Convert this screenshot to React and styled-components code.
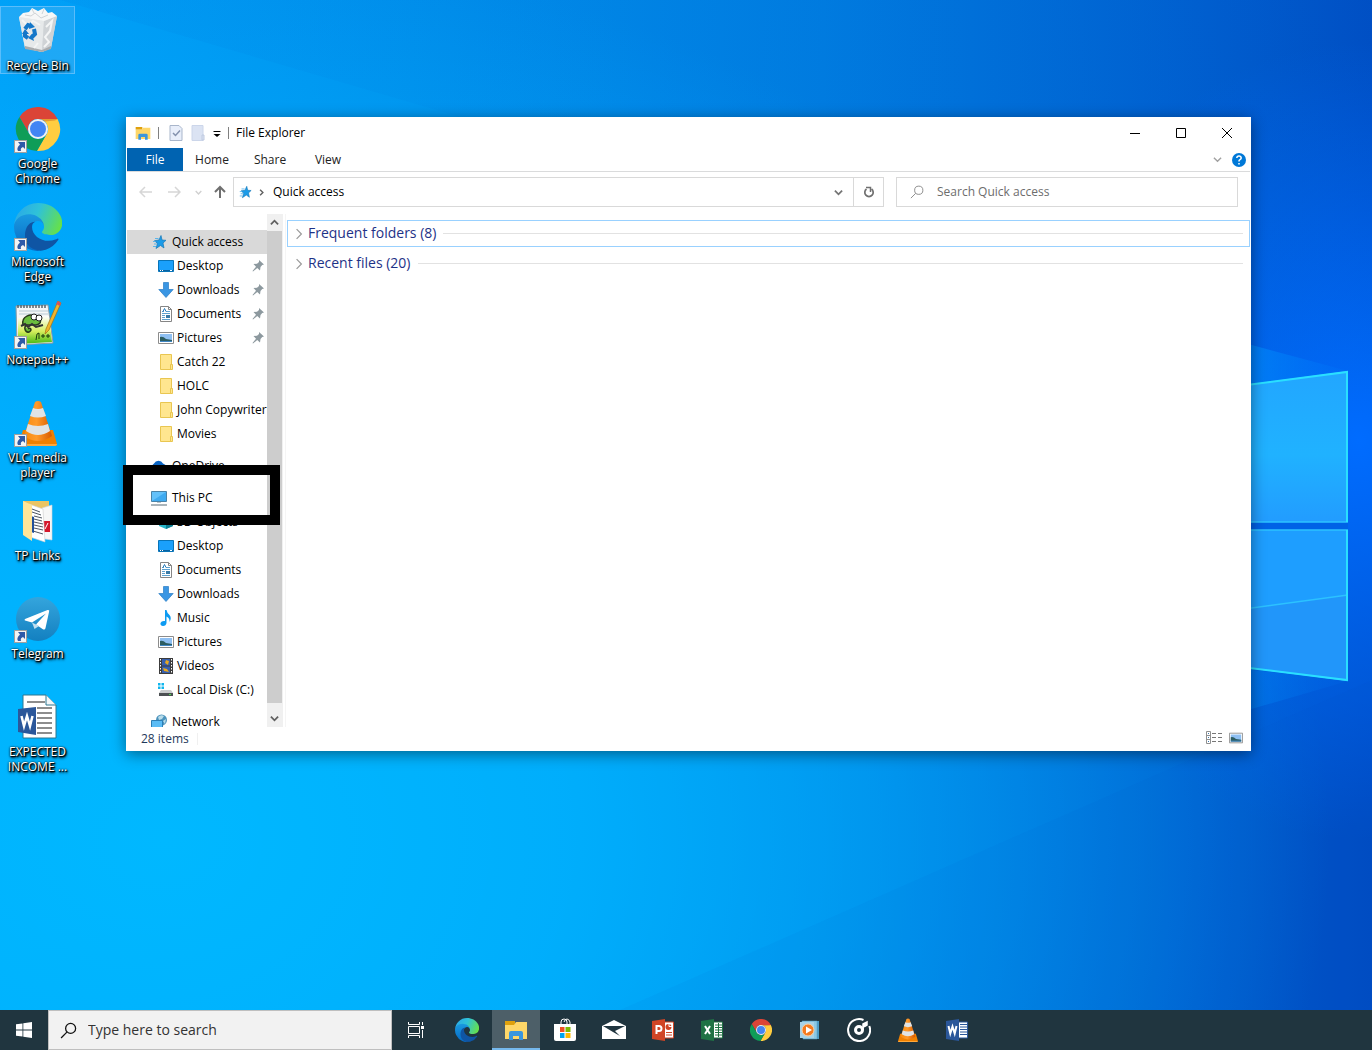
import React from "react";
import styled, { createGlobalStyle } from "styled-components";

const GlobalStyle = createGlobalStyle`
  * {
    box-sizing: border-box;
  }

  body {
    margin: 0;
    font-family: "Open Sans", "Noto Sans", sans-serif;
    font-size: 12px;
    line-height: 16px;
    color: #000;
  }

  button, input {
    font: inherit;
    color: inherit;
  }

  button {
    border: none;
    background: none;
    padding: 0;
  }

  svg {
    display: block;
    flex: none;
  }
`;

/* ---------- desktop ---------- */

const Desktop = styled.div`
  position: relative;
  display: flex;
  flex-direction: column;
  min-height: 100vh;
  overflow: hidden;
  isolation: isolate;
  background:
    radial-gradient(ellipse 24% 38% at 99% 42%, #006cff 0%, rgba(0, 108, 255, 0) 100%),
    radial-gradient(ellipse 85% 85% at 12% 80%, #00b8ff 0%, rgba(0, 180, 255, 0.85) 35%, rgba(0, 160, 255, 0) 100%),
    linear-gradient(90deg, #00a0f8 0%, #0090ec 30%, #007ce0 60%, #0060d0 85%, #004cc2 100%);
`;

const WallpaperSvg = styled.svg`
  position: absolute;
  inset: 0;
  width: 100%;
  height: 100%;
  z-index: -1;
`;

const Workspace = styled.main`
  flex: 1;
  display: flex;
  align-items: flex-start;
`;

const Shortcuts = styled.div`
  display: flex;
  flex-direction: column;
  gap: 30px;
  width: 76px;
  padding-top: 6px;
  flex: none;
`;

const Shortcut = styled.button`
  display: flex;
  flex-direction: column;
  align-items: center;
  justify-content: flex-start;
  width: 75px;
  height: 68px;
  border: 1px solid ${(p) => (p.$selected ? "rgba(150, 210, 255, 0.5)" : "transparent")};
  background: ${(p) => (p.$selected ? "rgba(120, 190, 240, 0.25)" : "transparent")};
`;

const ShortcutArt = styled.span`
  position: relative;
  display: block;
  height: 48px;
  margin-bottom: 3px;
`;

const LinkBadge = styled.span`
  position: absolute;
  left: 0;
  bottom: 0;
  border: 1px solid #a0a0a0;
  background: #f4f4f4;
`;

const ShortcutLabel = styled.span`
  color: #fff;
  line-height: 15px;
  text-align: center;
  white-space: pre;
  text-shadow: 1px 1px 1px #000, 1px 1px 2px #000, 1px 2px 3px #000, 0 0 2px #000;
`;

/* ---------- explorer window ---------- */

const Window = styled.section`
  position: relative;
  flex: 1;
  min-width: 0;
  margin: 117px 121px 60px 50px;
  padding: 0 1px;
  background: #fff;
  box-shadow: 0 3px 14px rgba(0, 0, 0, 0.45);
`;

const TitleBar = styled.header`
  display: flex;
  align-items: center;
  height: 31px;
  padding-left: 8px;
`;

const Separator = styled.span`
  width: 1px;
  height: 12px;
  margin: 0 7px;
  background: #808080;
`;

const QuickTools = styled.div`
  display: flex;
  align-items: center;
  gap: 8px;
  padding-left: 3px;
`;

const Title = styled.h1`
  flex: 1;
  margin: 0;
  font-size: 12px;
  font-weight: 400;
`;

const CaptionButton = styled.button`
  display: flex;
  align-items: center;
  justify-content: center;
  width: 46px;
  height: 31px;
`;

const Ribbon = styled.div`
  display: flex;
  height: 24px;
  border-bottom: 1px solid #dadbdc;
`;

const RibbonTab = styled.button`
  height: 23px;
  width: ${(p) => (p.$active ? "56px" : "58px")};
  background: ${(p) => (p.$active ? "#0063b1" : "transparent")};
  color: ${(p) => (p.$active ? "#fff" : "#222")};
`;

const RibbonTools = styled.div`
  display: flex;
  align-items: center;
  gap: 9px;
  margin-left: auto;
  padding-right: 3px;
`;

const NavBar = styled.div`
  display: flex;
  align-items: center;
  height: 42px;
  padding: 0 12px 2px 12px;
`;

const NavButtons = styled.div`
  display: flex;
  align-items: center;
  gap: 14px;
  width: 94px;
  flex: none;
`;

const UpSlot = styled.span`
  margin-left: -3px;
`;

const AddressBox = styled.div`
  display: flex;
  align-items: center;
  flex: 1 1 651px;
  min-width: 0;
  height: 30px;
  margin-right: 12px;
  padding-left: 4px;
  border: 1px solid #d9d9d9;
`;

const AddressPath = styled.span`
  display: flex;
  align-items: center;
  gap: 6px;
  flex: 1;
`;

const AddressText = styled.span`
  padding-left: 2px;
`;

const AddressButton = styled.button`
  display: flex;
  align-items: center;
  justify-content: center;
  width: 30px;
  height: 28px;
  border-left: 1px solid ${(p) => (p.$divided ? "#d9d9d9" : "transparent")};
`;

const SearchBox = styled.label`
  display: flex;
  align-items: center;
  gap: 13px;
  flex: 1 1 342px;
  min-width: 0;
  height: 30px;
  padding: 0 13px;
  border: 1px solid #d9d9d9;
`;

const SearchInput = styled.input`
  flex: 1;
  min-width: 0;
  padding: 0;
  border: none;
  outline: none;
  background: transparent;

  &::placeholder {
    color: ${(p) => p.$tone};
    opacity: 1;
  }
`;

const Body = styled.div`
  display: flex;
  height: 513px;
`;

const Tree = styled.nav`
  width: 140px;
  padding-top: 16px;
  overflow: hidden;
  flex: none;
`;

const TreeGroup = styled.div`
  margin-bottom: 8px;
`;

const TreeItem = styled.button`
  display: flex;
  align-items: center;
  gap: ${(p) => (p.$child ? "3px" : "5px")};
  width: 140px;
  height: 24px;
  padding-left: ${(p) => (p.$child ? "31px" : "24px")};
  background: ${(p) => (p.$selected ? "#d9d9d9" : "transparent")};
  white-space: nowrap;
  text-align: left;
`;

const TreeLabel = styled.span`
  flex: 1;
  line-height: 12px;
`;

const PinSlot = styled.span`
  padding-right: 3px;
`;

const ScrollTrack = styled.div`
  display: flex;
  flex-direction: column;
  width: 16px;
  background: #f0f0f0;
  flex: none;
`;

const ScrollArrow = styled.button`
  display: flex;
  align-items: center;
  justify-content: center;
  width: 15px;
  height: 17px;
`;

const ScrollThumb = styled.div`
  flex: 1;
  margin: 0 1px 7px 0;
  background: #cdcdcd;
`;

const Content = styled.div`
  flex: 1;
  margin-left: 2px;
  padding: 6px 0 0 1px;
  border-left: 1px solid #f5f5f5;
`;

const GroupHeader = styled.button`
  display: flex;
  align-items: center;
  gap: 3px;
  width: 100%;
  height: 27px;
  margin-bottom: 3px;
  padding: 0 6px 0 5px;
  border: 1px solid ${(p) => (p.$focused ? "#99d1ff" : "transparent")};
  color: #1e3287;
  font-size: 14px;
`;

const GroupName = styled.span`
  line-height: 20px;
  padding-bottom: 2px;
`;

const GroupRule = styled.span`
  flex: 1;
  height: 1px;
  margin-left: 4px;
  background: #e2e2e2;
`;

const StatusBar = styled.footer`
  display: flex;
  align-items: center;
  justify-content: space-between;
  height: 24px;
  padding: 0 7px 0 14px;
  color: #1e395b;
`;

const StatusCount = styled.span`
  padding-right: 8px;
  border-right: 1px solid #f0f0f0;
  line-height: 12px;
`;

const ViewModes = styled.div`
  display: flex;
  align-items: center;
  gap: 6px;
  padding-bottom: 3px;
`;

// black frame around the "This PC" node
const Highlight = styled.div`
  position: absolute;
  left: -3px;
  top: 348px;
  width: 157px;
  height: 60px;
  border: 10px solid #000;
  pointer-events: none;
`;

/* ---------- taskbar ---------- */

const Taskbar = styled.footer`
  display: flex;
  height: 40px;
  background: #20353f;
`;

const TaskButton = styled.button`
  display: flex;
  align-items: center;
  justify-content: center;
  width: 48px;
  height: 40px;
  background: ${(p) => (p.$active ? "#4d5f68" : "transparent")};
  border-bottom: ${(p) => (p.$active ? "2px solid #76b9ed" : "none")};
  padding-top: ${(p) => (p.$active ? "2px" : "0")};
`;

const TaskSearch = styled.label`
  display: flex;
  align-items: center;
  gap: 11px;
  width: 344px;
  padding: 0 11px;
  background: #f2f2f2;
  border: 1px solid #bfbfbf;
  font-size: 14px;
  line-height: 20px;
`;

const PinnedApps = styled.div`
  display: flex;
  gap: 1px;
  margin-left: 3px;
`;

/* ---------- drawings ---------- */

const Wallpaper = () => (
  <WallpaperSvg viewBox="0 0 1372 1050" preserveAspectRatio="none" aria-hidden="true">
    <defs>
      <linearGradient id="paneTop" x1="0" y1="0" x2="0" y2="1">
        <stop offset="0" stopColor="#22a6ff" />
        <stop offset=".55" stopColor="#20b2ff" />
        <stop offset="1" stopColor="#229cff" />
      </linearGradient>
      <linearGradient id="beam" x1="0" y1="0" x2="1" y2="0">
        <stop offset="0" stopColor="#00a4ff" stopOpacity=".7" />
        <stop offset="1" stopColor="#0080ff" stopOpacity=".1" />
      </linearGradient>
      <linearGradient id="topShade" x1="0" y1="0" x2="0" y2="1">
        <stop offset="0" stopColor="#0070d8" stopOpacity=".1" />
        <stop offset="1" stopColor="#0070d8" stopOpacity="0" />
      </linearGradient>
    </defs>
    <path d="M60 0H1372V420H1250L450 114Z" fill="url(#topShade)" />
    <path d="M620 1010 1372 680V1010Z" fill="#0058c8" opacity=".05" />
    <path d="M1200 331 1348 371 1200 392Z" fill="url(#beam)" />
    <path d="M1200 664 1348 681 1200 724Z" fill="url(#beam)" opacity=".6" />
    <path d="M1200 522H1348V530H1200Z" fill="#0062e6" />
    <path d="M1200 391 1348 371V522H1200Z" fill="url(#paneTop)" />
    <path d="M1200 530H1348V681L1200 662Z" fill="#1e9eff" />
    <path d="M1200 615 1348 595V681L1200 662Z" fill="#2196fa" />
    <path d="M1200 615 1348 595M1200 522H1348M1200 530H1348" stroke="#2cc2ff" strokeWidth="1.5" fill="none" />
    <path d="M1200 391 1347 372V522M1347 530V680L1200 662" stroke="#2adfff" strokeWidth="2" fill="none" />
  </WallpaperSvg>
);

const RecycleBin = () => (
  <svg width="48" height="48" viewBox="0 0 48 48">
    <path d="M5 10 43 9 37 41 28 45 11 41Z" fill="#d9dcde" />
    <path d="M5 10 30 14 28 45 11 41Z" fill="#e6e9ea" />
    <path d="M30 14 43 9 37 41 28 45Z" fill="#cfd3d6" />
    <path d="M11 39 28 43 37 39V42L28 45 11 42Z" fill="#a9acae" />
    <path d="M5 10 9 6 15 5 18 1 24 4 30 1 34 6 38 5 43 9 30 14Z" fill="#f6f7f7" />
    <path d="M11 8 17 9 21 6 27 11 34 8M18 2 20 6M30 2 28 7" stroke="#cfd3d6" fill="none" />
    <path d="M32 20 38 14 36 24 31 30 35 35 30 40M8 13 14 19 19 14 26 18M24 36 20 41" stroke="#f4f5f5" fill="none" strokeWidth="2" />
    <g fill="none" stroke="#1477c9" strokeWidth="4">
      <path d="M11 22 14 18 17 19" />
      <path d="M20 22 21 27 18 30" />
      <path d="M14 31 11 29 11 26" />
    </g>
    <path d="M16 15 21 20 15 22ZM20 34 14 31 18 27ZM8 27 11 22 15 27Z" fill="#1477c9" />
  </svg>
);

const Chrome = ({ size = 48 }) => (
  <svg width={size} height={size} viewBox={size === 48 ? "0 0 48 48" : "2 2 44 44"}>
    <path d="M24 14H43.600A22 22 0 0 0 5.500 12L15.300 29A10 10 0 0 1 24 14Z" fill="#db4437" />
    <path d="M32.700 29 22.900 46A22 22 0 0 0 43.600 14H24A10 10 0 0 1 32.700 29Z" fill="#ffcd40" />
    <path d="M15.300 29 5.500 12A22 22 0 0 0 22.900 46L32.700 29A10 10 0 0 1 15.300 29Z" fill="#0f9d58" />
    <path d="M24 14H43.600L41 15.500 26 17Z" fill="#a52714" opacity=".3" />
    <circle cx="24" cy="24" r="10" fill="#f1f1f1" />
    <circle cx="24" cy="24" r="8" fill="#4285f4" />
  </svg>
);

const Edge = ({ size = 48 }) => (
  <svg width={size} height={size} viewBox="0 0 256 256">
    <defs>
      <linearGradient id="edgeGreen" x1="0" y1=".3" x2="1" y2=".6">
        <stop offset="0" stopColor="#2aa9e8" />
        <stop offset=".45" stopColor="#2fc2d8" />
        <stop offset="1" stopColor="#66e04a" />
      </linearGradient>
      <linearGradient id="edgeBlue" x1="0" y1="0" x2="0" y2="1">
        <stop offset="0" stopColor="#1b9de2" />
        <stop offset="1" stopColor="#0669c4" />
      </linearGradient>
    </defs>
    <path d="M105.700 241.400a79.200 79.200 0 0 1-22.700-21.300 80.700 80.700 0 0 1 29.500-120c3.200-1.500 8.500-4.100 15.600-4a32.400 32.400 0 0 1 25.700 13 31.900 31.900 0 0 1 6.300 18.700c0-.2 24.500-79.600-80-79.600-43.900 0-80 41.700-80 78.200a130.200 130.200 0 0 0 12.100 56 128 128 0 0 0 156.400 67 75.500 75.500 0 0 1-62.800-8z" fill="url(#edgeBlue)" />
    <path d="M231 190.500c-3.400 1.800-6.900 3.400-10.500 4.700a101.600 101.600 0 0 1-35.900 6.500c-47.300 0-88.500-32.500-88.500-74.300a31.500 31.500 0 0 1 16.400-27.300c-42.800 1.800-53.800 46.400-53.800 72.500 0 74 68.100 81.400 82.800 81.400 7.900 0 19.800-2.300 27-4.600l1.300-.4a128.300 128.300 0 0 0 66.600-52.800 4 4 0 0 0-5.400-5.700z" fill="#0f55a4" />
    <path d="M152.300 148.900c-.9 1-3.300 2.500-3.300 5.700 0 2.600 1.700 5.100 4.700 7.300 14.600 10.100 42 8.800 42.100 8.800 10.800 0 21.300-2.900 30.600-8.400a62 62 0 0 0 30.700-53.500c.3-22.500-8-37.500-11.400-44.200C224.300 22.600 178.300 0 128.100 0a128 128 0 0 0-128 126.200c.5-36.500 36.800-66 80-66 3.500 0 23.500.3 42 10a72.600 72.600 0 0 1 30.900 29.300c6.100 10.600 7.200 24.100 7.200 29.500s-2.700 13.300-7.900 19.900z" fill="url(#edgeGreen)" />
  </svg>
);

const NotepadPlus = () => (
  <svg width="48" height="48" viewBox="0 0 48 48">
    <defs>
      <linearGradient id="nppGreen" x1="0" y1="0" x2="0" y2="1">
        <stop offset="0" stopColor="#fff" />
        <stop offset=".55" stopColor="#d5ee5c" />
        <stop offset="1" stopColor="#43b814" />
      </linearGradient>
    </defs>
    <path d="M2 5 34 4 39 42 3 44Z" fill="#f4f6f7" stroke="#8c9aa1" />
    <path d="M4 17 35 15 38 41 4 43Z" fill="url(#nppGreen)" />
    <path d="M4 4V7M7 4V7M10 4V7M13 4V7M16 4V7M19 4V7M22 4V7M25 4V7M28 4V7M31 4V7" stroke="#56646c" strokeWidth="1.500" />
    <path d="M5 10H34M5 13H34" stroke="#b9cbd5" />
    <path d="M9 24C7 15 17 12 22 16 28 17 28 23 22 24H13C9 25 11 32 15 31 19 29 16 26 14 28" fill="#6bbd3e" stroke="#263a1b" strokeWidth="1.500" />
    <circle cx="20" cy="16" r="3" fill="#fff" stroke="#222" />
    <circle cx="25" cy="17" r="3" fill="#fff" stroke="#222" />
    <path d="M7 25 11 23 14 26 18 23 22 26 29 24" stroke="#333" strokeWidth="2" fill="none" />
    <path d="M22 39 23 33 25 32 25 38M27 35H31M29 33V37M32 35H36M34 33V37" stroke="#173a0c" fill="none" />
    <path d="M44 0 47 2 35 29 31 33 32 28Z" fill="#efb52d" stroke="#a66f13" strokeWidth=".7" />
    <path d="M44 0 47 2 46 5 42 3Z" fill="#d8545b" />
  </svg>
);

const Vlc = ({ size = 48 }) => (
  <svg width={size} height={size} viewBox={size === 48 ? "0 0 48 48" : "4 1 40 46"}>
    <defs>
      <linearGradient id="vlcOrange" x1="0" y1="0" x2="1" y2="0">
        <stop offset="0" stopColor="#f78a10" />
        <stop offset=".45" stopColor="#ff9a2a" />
        <stop offset="1" stopColor="#d85a00" />
      </linearGradient>
    </defs>
    <path d="M9 31H39L43 45Q43 47 40 47H7Q4 47 5 45Z" fill="#f08000" />
    <path d="M5 45H43Q43 47 40 47H7Q4 47 5 45Z" fill="#ffa83a" />
    <path d="M21 3Q24 1 27 3L38 37Q31 42 24 42T10 37Z" fill="url(#vlcOrange)" />
    <path d="M19 9Q24 11 29 9L32 17Q24 20 16 17ZM14 25Q24 29 34 25L36 32Q24 40 12 32Z" fill="#e0e3e5" />
  </svg>
);

const LinksFolder = () => (
  <svg width="48" height="48" viewBox="0 0 48 48">
    <path d="M9 4H35V38H9Z" fill="#eac462" />
    <path d="M28 11 38 8V43L24 41Z" fill="#f7f7f7" stroke="#ccd4da" strokeWidth=".6" />
    <path d="M29 24H36V35H28Z" fill="#d5172b" />
    <path d="M31 32 34 26" stroke="#fff" />
    <path d="M15 7 29 12 31 45 16 40Z" fill="#fff" stroke="#cfcfcf" strokeWidth=".6" />
    <path d="M18 12 26 15M18 15 27 18M20 19 28 21M20 22 28 24M20 25 29 27M20 28 29 30M20 31 29 33M19 34 29 37" stroke="#4d5561" />
    <path d="M17 19 20 20V36L17 35Z" fill="#214f9b" />
    <path d="M9 4 18 8V44L9 38Z" fill="#ffe599" />
  </svg>
);

const Telegram = () => (
  <svg width="48" height="48" viewBox="0 0 48 48">
    <defs>
      <linearGradient id="tgBlue" x1="0" y1="0" x2="0" y2="1">
        <stop offset="0" stopColor="#34a5dd" />
        <stop offset="1" stopColor="#1380c0" />
      </linearGradient>
    </defs>
    <circle cx="24" cy="24" r="22" fill="url(#tgBlue)" />
    <path d="M11 24 33.500 15Q36 14.500 35 17L31.500 33Q31 35.500 28.500 34L22 29.500 32 18.500 18 27.500 11 25.500Q10 25 11 24Z" fill="#fff" />
    <path d="M18 27.500 20.500 34 25 31" fill="#bfdff0" />
  </svg>
);

const WordDoc = () => (
  <svg width="48" height="48" viewBox="0 0 48 48">
    <path d="M9 2H32L42 12V45H9Z" fill="#fff" stroke="#2d7790" />
    <path d="M32 2V12H42" fill="#f2f7f9" stroke="#2d7790" />
    <path d="M13 9H31M23 15H38M23 20H38M23 25H38M23 30H38M23 35H38M23 40H38" stroke="#8d8d8d" strokeWidth="2" />
    <path d="M4 16 22 14V42L4 39Z" fill="#2b579a" />
    <path d="M7.500 23 10 33 13 23 16 33 18.500 23" stroke="#fff" strokeWidth="2.500" fill="none" />
  </svg>
);

const Office = ({ color, mark, children }) => (
  <svg width="24" height="24" viewBox="0 0 24 24">
    <path d="M13 4H22.500V20H13Z" fill="#fff" stroke={color} />
    {children}
    <path d="M1 3 14 1V23L1 21Z" fill={color} />
    <path d={mark} stroke="#fff" strokeWidth="2" fill="none" />
  </svg>
);

const FolderApp = ({ size = 24 }) => (
  <svg width={size} height={size} viewBox="0 0 24 24">
    <path d="M1 3H11V7H1Z" fill="#e0a10c" />
    <path d="M1 7H10L12 4H23V21H1Z" fill="#ffd768" />
    <path d="M5 22V15Q5 13 7 13H17Q19 13 19 15V22H15V18H9V22Z" fill="#3a96dd" />
  </svg>
);

const Star = ({ size = 16 }) => (
  <svg width={size} height={size} viewBox="0 0 16 16">
    <path d="M10 1.500 11 6 15 6.300 12 9 13 14 9.500 11.500 5 14.500 6.500 9.500 3.500 6.700 8 6Z" fill="#1b9be8" stroke="#1678b8" strokeWidth=".7" />
    <path d="M4 4.500H7.500M2 7.500H4.500M3 10H6M2 12.500H5" stroke="#5cb5ea" />
  </svg>
);

const DesktopGlyph = () => (
  <svg width="16" height="16" viewBox="0 0 16 16">
    <path d="M.500 2.500H15.500V13.500H.500Z" fill="#1aa0fb" stroke="#0874b8" />
    <path d="M1 12.500H15" stroke="#0a62a0" />
    <path d="M2 12.500H3M4 12.500H5M12 12.500H14" stroke="#fff" />
  </svg>
);

const DownloadGlyph = () => (
  <svg width="16" height="16" viewBox="0 0 16 16">
    <path d="M5.500.500H10.500V7.500H15.200L8 15.500.8 7.500H5.500Z" fill="#3a96e3" stroke="#2a7dc4" strokeWidth=".7" />
  </svg>
);

const DocumentGlyph = () => (
  <svg width="16" height="16" viewBox="0 0 16 16">
    <path d="M2.500.500H10.500L13.500 3.500V15.500H2.500Z" fill="#fff" stroke="#858585" />
    <path d="M10.500.500V3.500H13.500" fill="none" stroke="#858585" />
    <path d="M4 5.500H6M8 5.500H12M4 7.500H12M4 9.500H7M4 11.500H7M4 13.500H12" stroke="#5da1cf" />
    <path d="M8 9H12V12H8Z" fill="#397aa7" />
    <path d="M5 5.500 6.500 2.500 8 5.500" stroke="#2478b8" fill="none" />
  </svg>
);

const PictureGlyph = ({ size = 16 }) => (
  <svg width={size} height={size} viewBox="0 0 16 16">
    <path d="M.500 2.500H15.500V13.500H.500Z" fill="#fff" stroke="#8c8c8c" />
    <path d="M2 4H14V12H2Z" fill="#8fc0f3" />
    <path d="M2 7Q5 6 8 9L14 10V12H2Z" fill="#2c5d62" />
    <path d="M2 11H14V12H2Z" fill="#3f86c4" />
  </svg>
);

const FolderGlyph = () => (
  <svg width="16" height="16" viewBox="0 0 16 16">
    <path d="M2.500.500H13.500V15.500H2.500Z" fill="#ffe68f" stroke="#e9c651" />
    <path d="M12.500 10.500H14.500V15.500H12.500Z" fill="#ffe68f" stroke="#e9c651" />
  </svg>
);

const CloudGlyph = () => (
  <svg width="16" height="16" viewBox="0 0 16 16">
    <path d="M4 13A4 4 0 0 1 3 5.500 5 5 0 0 1 12 5.500 4 4 0 0 1 13 13Z" fill="#0a64c2" />
  </svg>
);

const PcGlyph = () => (
  <svg width="16" height="16" viewBox="0 0 16 16">
    <path d="M.500 1.500H15.500V11.500H.500Z" fill="#63c1fa" stroke="#4a83a8" />
    <path d="M1 11 15 2V11Z" fill="#3faaf0" />
    <path d="M6 12H10V13H6Z" fill="#bac4ca" />
    <path d="M0 15H16" stroke="#8e9ba3" strokeWidth="1.500" />
  </svg>
);

const CubeGlyph = () => (
  <svg width="16" height="16" viewBox="0 0 16 16">
    <path d="M8 1 15 4V12L8 15 1 12V4Z" fill="#28b5c8" />
    <path d="M8 7 15 4V12L8 15Z" fill="#0e7d92" />
    <path d="M8 1 15 4 8 7 1 4Z" fill="#7be0ea" />
  </svg>
);

const MusicGlyph = () => (
  <svg width="16" height="16" viewBox="0 0 16 16">
    <path d="M7 0H8.500Q9 3 11.500 5 14 8 11.500 12 12 8 8.500 6.500V13Q8 16 5 16 2 15.500 2.500 13 3.500 10.500 7 11Z" fill="#0d9bf2" />
  </svg>
);

const VideoGlyph = () => (
  <svg width="16" height="16" viewBox="0 0 16 16">
    <path d="M1 0H15V16H1Z" fill="#3c3c3c" />
    <path d="M4 1H12V7.500H4ZM4 8.500H12V15H4Z" fill="#375fae" />
    <path d="M8 2 11 3 10 7 7 5ZM5 10 9 11 11 14 6 13Z" fill="#e9a820" />
    <path d="M2.500 1V15M13.500 1V15" stroke="#fff" strokeDasharray="1.500 1.500" />
  </svg>
);

const DiskGlyph = () => (
  <svg width="16" height="16" viewBox="0 0 16 16">
    <path d="M0 1H2.500V3.500H0ZM3.500 1H6V3.500H3.500ZM0 4.500H2.500V7H0ZM3.500 4.500H6V7H3.500Z" fill="#10b6ee" />
    <path d="M3 8H13L15 11H1Z" fill="#c9cccd" />
    <path d="M1 11H15V14H1Z" fill="#4c5053" />
    <path d="M11 12.500H13" stroke="#4be04e" />
  </svg>
);

const NetworkGlyph = () => (
  <svg width="16" height="16" viewBox="0 0 16 16">
    <circle cx="10.500" cy="6" r="5.500" fill="#4d94bd" />
    <path d="M7 3Q10 0 13 2L11 5 8 6ZM12 7 15 5 14 10Z" fill="#b9dcea" />
    <path d="M.500 6.500H11.500V13.500H.500Z" fill="#5bbcf5" stroke="#2d7eb5" />
  </svg>
);

const PinGlyph = () => (
  <svg width="12" height="12" viewBox="0 0 12 12">
    <path d="M7 0 12 4.500 10.200 5 8.500 7 8 10.500 5.200 8 1 11.500.5 11 4 6.800 1.500 4 5 3.700 7 2Z" fill="#8d999f" />
  </svg>
);

const Chevron = ({ dir = "down", size = 9, color = "#606060", weight = 2 }) => {
  const paths = {
    down: "M1 3 5 7 9 3",
    up: "M1 7 5 3 9 7",
    right: "M3 1 7 5 3 9",
  };
  return (
    <svg width={size} height={size} viewBox="0 0 10 10">
      <path d={paths[dir]} stroke={color} strokeWidth={weight} fill="none" />
    </svg>
  );
};

const Arrow = ({ dir, color }) => {
  const paths = {
    left: "M13 7H1M6 2 1 7 6 12",
    right: "M1 7H13M8 2 13 7 8 12",
    up: "M7 13V2M2 7 7 2 12 7",
  };
  return (
    <svg width="14" height="14" viewBox="0 0 14 14">
      <path d={paths[dir]} stroke={color} strokeWidth={dir === "up" ? 2 : 1.5} fill="none" />
    </svg>
  );
};

const Magnifier = ({ size, color, weight = 1.2 }) => (
  <svg width={size} height={size} viewBox="0 0 16 16">
    <circle cx="10" cy="6" r="4.700" fill="none" stroke={color} strokeWidth={weight} />
    <path d="M6.500 9.500 1 15" stroke={color} strokeWidth={weight} />
  </svg>
);

/* ---------- data ---------- */

const shortcuts = [
  { label: "Recycle Bin", Icon: RecycleBin, selected: true },
  { label: "Google\nChrome", Icon: Chrome, linked: true },
  { label: "Microsoft\nEdge", Icon: Edge, linked: true },
  { label: "Notepad++", Icon: NotepadPlus, linked: true },
  { label: "VLC media\nplayer", Icon: Vlc, linked: true },
  { label: "TP Links", Icon: LinksFolder },
  { label: "Telegram", Icon: Telegram, linked: true },
  { label: "EXPECTED\nINCOME ...", Icon: WordDoc },
];

const tree = [
  [
    { label: "Quick access", Icon: Star, selected: true },
    { label: "Desktop", Icon: DesktopGlyph, child: true, pinned: true },
    { label: "Downloads", Icon: DownloadGlyph, child: true, pinned: true },
    { label: "Documents", Icon: DocumentGlyph, child: true, pinned: true },
    { label: "Pictures", Icon: PictureGlyph, child: true, pinned: true },
    { label: "Catch 22", Icon: FolderGlyph, child: true },
    { label: "HOLC", Icon: FolderGlyph, child: true },
    { label: "John Copywriter", Icon: FolderGlyph, child: true },
    { label: "Movies", Icon: FolderGlyph, child: true },
  ],
  [{ label: "OneDrive", Icon: CloudGlyph }],
  [
    { label: "This PC", Icon: PcGlyph },
    { label: "3D Objects", Icon: CubeGlyph, child: true },
    { label: "Desktop", Icon: DesktopGlyph, child: true },
    { label: "Documents", Icon: DocumentGlyph, child: true },
    { label: "Downloads", Icon: DownloadGlyph, child: true },
    { label: "Music", Icon: MusicGlyph, child: true },
    { label: "Pictures", Icon: PictureGlyph, child: true },
    { label: "Videos", Icon: VideoGlyph, child: true },
    { label: "Local Disk (C:)", Icon: DiskGlyph, child: true },
  ],
  [{ label: "Network", Icon: NetworkGlyph }],
];

const apps = [
  { name: "Microsoft Edge", icon: <Edge size={24} /> },
  { name: "File Explorer", icon: <FolderApp />, active: true },
  {
    name: "Microsoft Store",
    icon: (
      <svg width="24" height="24" viewBox="0 0 24 24">
        <path d="M8 6V4Q8 1 11 1T14 4V6M11 4Q12 1 14 1T17 4V6" stroke="#fff" fill="none" />
        <path d="M1 6H23V21Q23 23 21 23H3Q1 23 1 21Z" fill="#fff" />
        <path d="M7 9H11.500V14H7Z" fill="#f25022" />
        <path d="M12.500 9H17.500V14H12.500Z" fill="#7fba00" />
        <path d="M7 15H11.500V20H7Z" fill="#00a4ef" />
        <path d="M12.500 15H17.500V20H12.500Z" fill="#ffb900" />
      </svg>
    ),
  },
  {
    name: "Mail",
    icon: (
      <svg width="24" height="24" viewBox="0 0 24 24">
        <path d="M0 8 12 2 24 8V21H0Z" fill="#fff" />
        <path d="M1 8H23L13 13 18 18 11 14Z" fill="#20353f" />
      </svg>
    ),
  },
  {
    name: "PowerPoint",
    icon: (
      <Office color="#d04525" mark="M5.500 16V8H8Q10.500 8 10.500 10.500T8 13H5.500">
        <path d="M15 14.500H21M15 17H21" stroke="#d04525" />
        <circle cx="17.500" cy="9" r="3" fill="#d04525" />
        <path d="M18 5V8.500H21" stroke="#fff" fill="none" />
      </Office>
    ),
  },
  {
    name: "Excel",
    icon: (
      <Office color="#207245" mark="M5 8 10 16M10 8 5 16">
        <path d="M15 7H22M15 9.500H22M15 12H22M15 14.500H22M15 17H22M18.500 5V19" stroke="#207245" />
      </Office>
    ),
  },
  { name: "Google Chrome", icon: <Chrome size={22} /> },
  {
    name: "Windows Media Player",
    icon: (
      <svg width="22" height="22" viewBox="0 0 22 22">
        <path d="M5 2H20V20H7Z" fill="#4d9cc6" />
        <path d="M3 2H18V20H4Z" fill="#8cc8e4" stroke="#579cc0" strokeWidth=".5" />
        <path d="M1 3H15V19H1Z" fill="#a6d2e8" />
        <circle cx="9" cy="11" r="6" fill="#f47b20" stroke="#fbd0a3" />
        <path d="M7 7.500 13 11 7 14.500Z" fill="#fff" />
      </svg>
    ),
  },
  {
    name: "Groove Music",
    icon: (
      <svg width="24" height="24" viewBox="0 0 24 24">
        <path d="M16.500 2A11 11 0 1 0 22.300 8" stroke="#fff" strokeWidth="2" fill="none" />
        <circle cx="12" cy="12" r="3.500" fill="none" stroke="#fff" strokeWidth="3" />
        <path d="M16 12V6L20 4V7L17 9" fill="#fff" stroke="#fff" strokeWidth="1.500" />
      </svg>
    ),
  },
  { name: "VLC media player", icon: <Vlc size={24} /> },
  {
    name: "Word",
    icon: (
      <Office color="#2b579a" mark="M3.500 8 5.300 15.500 7.500 8.500 9.700 15.500 11.500 8">
        <path d="M15 6.500H22M15 9H22M15 11.500H22M15 14H22M15 16.500H22" stroke="#2b579a" />
      </Office>
    ),
  },
];

/* ---------- components ---------- */

function DesktopShortcuts() {
  return (
    <Shortcuts>
      {shortcuts.map(({ label, Icon, linked, selected }) => (
        <Shortcut key={label} $selected={selected}>
          <ShortcutArt>
            <Icon />
            {linked && (
              <LinkBadge>
                <svg width="11" height="11" viewBox="0 0 11 11">
                  <path d="M3 1H10V8L8 6Q5 7 6 10H3Q1 7 5 3.500Z" fill="#2f5aa8" />
                </svg>
              </LinkBadge>
            )}
          </ShortcutArt>
          <ShortcutLabel>{label}</ShortcutLabel>
        </Shortcut>
      ))}
    </Shortcuts>
  );
}

function WindowTop() {
  return (
    <>
      <TitleBar>
        <FolderApp size={16} />
        <Separator />
        <QuickTools>
          <svg width="14" height="16" viewBox="0 0 14 16">
            <path d="M1 .500H10L13 3.500V15.500H1Z" fill="#e8eefa" stroke="#a9b6cb" />
            <path d="M4 8 6.500 10.500 11 5.500" stroke="#8391ad" strokeWidth="1.500" fill="none" />
          </svg>
          <svg width="14" height="16" viewBox="0 0 14 16">
            <path d="M1 .500H12V15.500H1Z" fill="#dbe3f3" stroke="#ccd6ea" />
            <path d="M11 10H13V15H11Z" fill="#dbe3f3" stroke="#bfcae0" />
          </svg>
          <svg width="8" height="8" viewBox="0 0 8 8">
            <path d="M.500 2.500H7.500" stroke="#000" />
            <path d="M.500 5H7.500L4 8Z" />
          </svg>
        </QuickTools>
        <Separator />
        <Title>File Explorer</Title>
        <CaptionButton aria-label="Minimize">
          <svg width="10" height="10" viewBox="0 0 10 10">
            <path d="M0 5.500H10" stroke="#000" />
          </svg>
        </CaptionButton>
        <CaptionButton aria-label="Maximize">
          <svg width="10" height="10" viewBox="0 0 10 10">
            <path d="M.500.500H9.500V9.500H.500Z" stroke="#000" fill="none" />
          </svg>
        </CaptionButton>
        <CaptionButton aria-label="Close">
          <svg width="10" height="10" viewBox="0 0 10 10">
            <path d="M0 0 10 10M10 0 0 10" stroke="#000" />
          </svg>
        </CaptionButton>
      </TitleBar>
      <Ribbon>
        <RibbonTab $active>File</RibbonTab>
        <RibbonTab>Home</RibbonTab>
        <RibbonTab>Share</RibbonTab>
        <RibbonTab>View</RibbonTab>
        <RibbonTools>
          <Chevron color="#a0a0a0" weight={1.5} />
          <svg width="16" height="16" viewBox="0 0 16 16">
            <circle cx="8" cy="8" r="7" fill="#0078d7" />
            <path d="M5.800 6Q6 4 8 4T10.200 6Q10.200 7 9 7.600T8 9.500M8 11V12.500" stroke="#fff" strokeWidth="1.500" fill="none" />
          </svg>
        </RibbonTools>
      </Ribbon>
      <NavBar>
        <NavButtons>
          <Arrow dir="left" color="#d6d6d6" />
          <Arrow dir="right" color="#d6d6d6" />
          <Chevron color="#d0d0d0" size={7} />
          <UpSlot>
            <Arrow dir="up" color="#6f6f6f" />
          </UpSlot>
        </NavButtons>
        <AddressBox>
          <AddressPath>
            <Star size={14} />
            <Chevron dir="right" size={7} />
            <AddressText>Quick access</AddressText>
          </AddressPath>
          <AddressButton aria-label="Previous locations">
            <Chevron color="#747474" weight={2} />
          </AddressButton>
          <AddressButton $divided aria-label="Refresh">
            <svg width="12" height="12" viewBox="0 0 12 12">
              <path d="M3.500 3A4.200 4.200 0 1 0 8.500 3" stroke="#707070" strokeWidth="1.700" fill="none" />
              <path d="M3 1.500H7.500V6" stroke="#707070" strokeWidth="1.500" fill="none" />
            </svg>
          </AddressButton>
        </AddressBox>
        <SearchBox>
          <Magnifier size={14} color="#808080" weight={1} />
          <SearchInput $tone="#6d6d6d" placeholder="Search Quick access" aria-label="Search Quick access" />
        </SearchBox>
      </NavBar>
    </>
  );
}

function NavigationTree() {
  return (
    <Tree>
      {tree.map((group) => (
        <TreeGroup key={group[0].label}>
          {group.map(({ label, Icon, child, pinned, selected }) => (
            <TreeItem key={label} $child={child} $selected={selected}>
              <Icon />
              <TreeLabel>{label}</TreeLabel>
              {pinned && (
                <PinSlot>
                  <PinGlyph />
                </PinSlot>
              )}
            </TreeItem>
          ))}
        </TreeGroup>
      ))}
    </Tree>
  );
}

function Explorer() {
  return (
    <Window>
      <WindowTop />
      <Body>
        <NavigationTree />
        <ScrollTrack>
          <ScrollArrow aria-label="Scroll up">
            <Chevron dir="up" />
          </ScrollArrow>
          <ScrollThumb />
          <ScrollArrow aria-label="Scroll down">
            <Chevron />
          </ScrollArrow>
        </ScrollTrack>
        <Content>
          <GroupHeader $focused>
            <Chevron dir="right" size={12} color="#9a9a9a" weight={1} />
            <GroupName>Frequent folders (8)</GroupName>
            <GroupRule />
          </GroupHeader>
          <GroupHeader>
            <Chevron dir="right" size={12} color="#9a9a9a" weight={1} />
            <GroupName>Recent files (20)</GroupName>
            <GroupRule />
          </GroupHeader>
        </Content>
      </Body>
      <StatusBar>
        <StatusCount>28 items</StatusCount>
        <ViewModes>
          <svg width="17" height="13" viewBox="0 0 17 13">
            <path d="M.500.500H4.500V12.500H.500ZM.500 4.500H4.500M.500 8.500H4.500" stroke="#8f8f8f" fill="none" />
            <path d="M6 2.500H10M12 2.500H16M6 6.500H10M12 6.500H16M6 10.500H10M12 10.500H16" stroke="#777" />
            <path d="M2 2.500H3M2 6.500H3M2 10.500H3" stroke="#3d78ad" />
          </svg>
          <PictureGlyph size={14} />
        </ViewModes>
      </StatusBar>
      <Highlight />
    </Window>
  );
}

function BottomBar() {
  return (
    <Taskbar>
      <TaskButton aria-label="Start">
        <svg width="16" height="16" viewBox="0 0 16 16">
          <path d="M0 2.300 6.500 1.400V7.500H0ZM7.300 1.300 16 0V7.500H7.300ZM0 8.400H6.500V14.600L0 13.700ZM7.300 8.400H16V16L7.300 14.700Z" fill="#fff" />
        </svg>
      </TaskButton>
      <TaskSearch>
        <Magnifier size={17} color="#111" />
        <SearchInput $tone="#333" placeholder="Type here to search" aria-label="Type here to search" />
      </TaskSearch>
      <TaskButton aria-label="Task View">
        <svg width="17" height="16" viewBox="0 0 17 16">
          <path d="M.500 4.500H11.500V11.500H.500ZM.500 0V2.500H11.500V0M.500 16V13.500H11.500V16M14.500 0V3M14.500 8V16" stroke="#fff" fill="none" />
          <path d="M13 4H16V7H13Z" fill="#fff" />
        </svg>
      </TaskButton>
      <PinnedApps>
        {apps.map(({ name, icon, active }) => (
          <TaskButton key={name} $active={active} aria-label={name}>
            {icon}
          </TaskButton>
        ))}
      </PinnedApps>
    </Taskbar>
  );
}

function App() {
  return (
    <>
      <GlobalStyle />
      <Desktop>
        <Wallpaper />
        <Workspace>
          <DesktopShortcuts />
          <Explorer />
        </Workspace>
        <BottomBar />
      </Desktop>
    </>
  );
}

export default App;
